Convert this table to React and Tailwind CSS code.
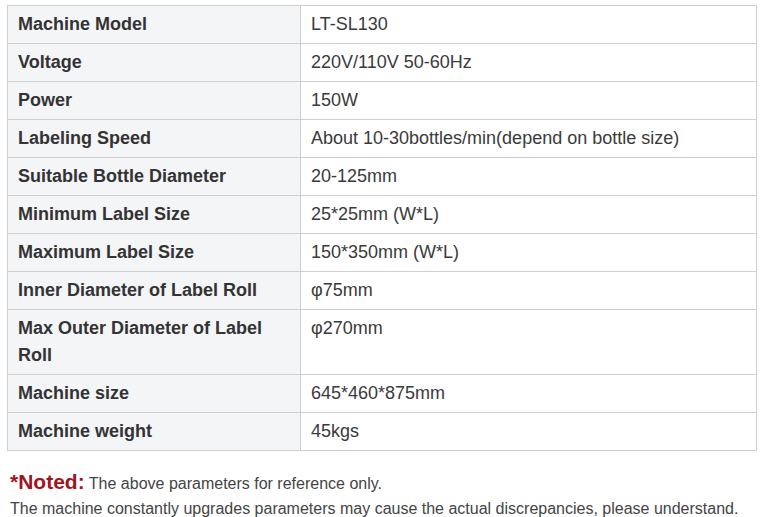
const specs = [
  ["Machine Model", "LT-SL130"],
  ["Voltage", "220V/110V 50-60Hz"],
  ["Power", "150W"],
  ["Labeling Speed", "About 10-30bottles/min(depend on bottle size)"],
  ["Suitable Bottle Diameter", "20-125mm"],
  ["Minimum Label Size", "25*25mm (W*L)"],
  ["Maximum Label Size", "150*350mm (W*L)"],
  ["Inner Diameter of Label Roll", "φ75mm"],
  ["Max Outer Diameter of Label Roll", "φ270mm"],
  ["Machine size", "645*460*875mm"],
  ["Machine weight", "45kgs"],
];

export default function App() {
  return (
    <div className="bg-white w-[761px] h-[517px] pt-[5px] pl-[7px] font-['Liberation_Sans',Arial,sans-serif] text-[#333]">
      <table className="w-[750px] border-collapse table-fixed">
        <colgroup>
          <col className="w-[293px]" />
          <col />
        </colgroup>
        <tbody>
          {specs.map(([label, value]) => (
            <tr key={label}>
              <td className="border border-[#cfcfcf] bg-[#f4f5f7] px-[10px] py-[5px] align-top text-[18px] leading-[27px] font-bold">
                {label}
              </td>
              <td className="border border-[#cfcfcf] px-[10px] py-[5px] align-top text-[18px] leading-[27px] text-[#3a3a3a]">
                {value}
              </td>
            </tr>
          ))}
        </tbody>
      </table>

      {/* Notes */}
      <div className="mt-[18px] pl-[3px] text-[16px] leading-[25px] text-[#444]">
        <p>
          <span className="text-[21px] font-bold text-[#a0141e]">*Noted:</span>{" "}
          The above parameters for reference only.
        </p>
        <p>
          The machine constantly upgrades parameters may cause the actual
          discrepancies, please understand.
        </p>
      </div>
    </div>
  );
}
